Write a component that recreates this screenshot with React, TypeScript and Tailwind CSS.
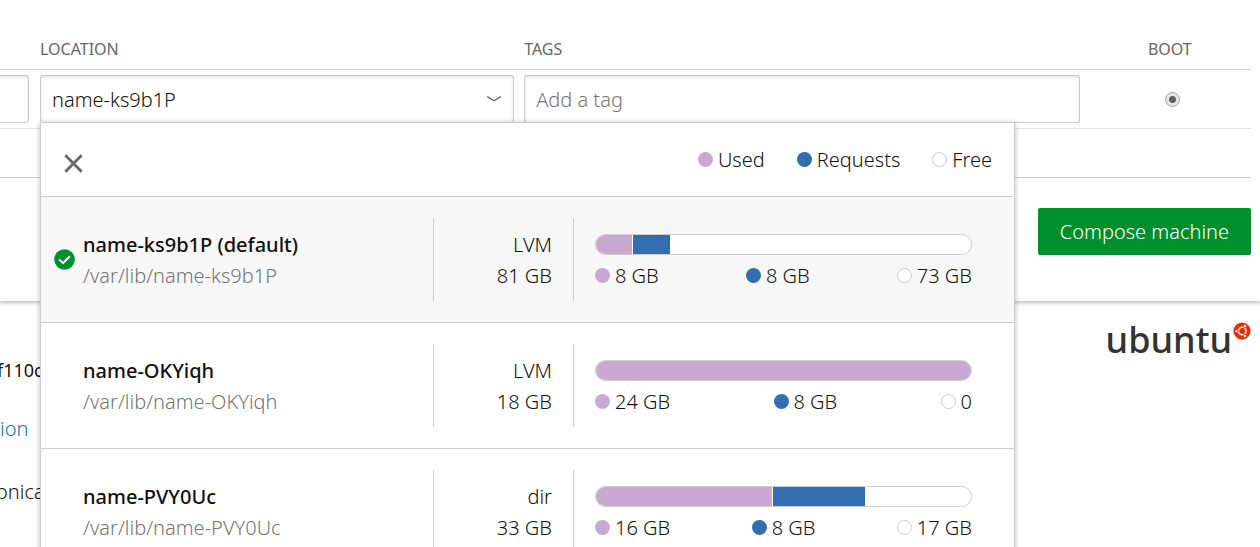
import { ReactNode } from "react";

type Pool = {
  name: string;
  path: string;
  type: string;
  total: string;
  used: string;
  requests: string;
  free: string;
  usedPct: number;
  requestPct: number;
  selected?: boolean;
};

const pools: Pool[] = [
  { name: "name-ks9b1P (default)", path: "/var/lib/name-ks9b1P", type: "LVM", total: "81 GB", used: "8 GB", requests: "8 GB", free: "73 GB", usedPct: 9.9, requestPct: 9.9, selected: true },
  { name: "name-OKYiqh", path: "/var/lib/name-OKYiqh", type: "LVM", total: "18 GB", used: "24 GB", requests: "8 GB", free: "0", usedPct: 100, requestPct: 0 },
  { name: "name-PVY0Uc", path: "/var/lib/name-PVY0Uc", type: "dir", total: "33 GB", used: "16 GB", requests: "8 GB", free: "17 GB", usedPct: 47.2, requestPct: 24.6 },
];

const dotColors = {
  used: "bg-[#c9a9d1]",
  requests: "bg-[#336fb0]",
  free: "border border-[#cdcdcd] bg-white",
};

function Key({ kind, children }: { kind: keyof typeof dotColors; children: ReactNode }) {
  return (
    <span className="flex items-center gap-[5px] whitespace-nowrap">
      <span className={`size-[15px] shrink-0 rounded-full ${dotColors[kind]}`} />
      {children}
    </span>
  );
}

function PoolRow({ pool }: { pool: Pool }) {
  return (
    <li className={`border-t border-[#cdcdcd] ${pool.selected ? "bg-[#f7f7f7]" : "bg-white"}`}>
      <button type="button" className="flex w-full py-[21px] text-left">
        <span className="flex w-[392px] items-center">
          <span className="flex w-[42px] pl-[13px]">
            {pool.selected && (
              <svg viewBox="0 0 21 21" className="size-[21px]" aria-hidden="true">
                <circle cx="10.5" cy="10.5" r="10.3" fill="#008f2d" />
                <path d="M5.2 10.4 9 14.2 15.8 7.2" fill="none" stroke="#fff" strokeWidth="2" />
              </svg>
            )}
          </span>
          <span className="flex flex-col leading-[31px]">
            <span className="font-medium text-[#111]">{pool.name}</span>
            <span className="text-[#757575]">{pool.path}</span>
          </span>
        </span>
        <span className="flex w-[141px] flex-col border-x border-[#cdcdcd] px-[21px] pt-[11px] pb-[10px] text-right leading-[31px]">
          <span>{pool.type}</span>
          <span>{pool.total}</span>
        </span>
        <span className="flex flex-1 flex-col gap-[5px] pt-[16px] pr-[42px] pl-[21px]">
          <span className="flex h-[21px] overflow-hidden rounded-full border border-[#cdcdcd] bg-white">
            <span className="border-r border-white bg-[#c9a9d1] last:border-r-0" style={{ width: `${pool.usedPct}%` }} />
            {pool.requestPct > 0 && <span className="bg-[#336fb0]" style={{ width: `${pool.requestPct}%` }} />}
          </span>
          <span className="flex justify-between leading-[31px]">
            <Key kind="used">{pool.used}</Key>
            <Key kind="requests">{pool.requests}</Key>
            <Key kind="free">{pool.free}</Key>
          </span>
        </span>
      </button>
    </li>
  );
}

function PoolMenu() {
  return (
    <div className="absolute top-[52px] left-[5px] z-10 w-[975px] rounded-[2px] border border-[#cdcdcd] bg-white shadow-[0_1px_5px_1px_rgba(0,0,0,0.2)]">
      <div className="flex h-[73px] items-center justify-between px-[22px]">
        <button type="button" aria-label="Close" className="mt-[8px] block">
          <svg viewBox="0 0 21 21" className="size-[21px]" aria-hidden="true">
            <path d="M2.3 2.3 18.7 18.7M18.7 2.3 2.3 18.7" fill="none" stroke="#666" strokeWidth="2.8" />
          </svg>
        </button>
        <div className="flex gap-[32px]">
          <Key kind="used">Used</Key>
          <Key kind="requests">Requests</Key>
          <Key kind="free">Free</Key>
        </div>
      </div>
      <ul>
        {pools.map((pool) => (
          <PoolRow key={pool.name} pool={pool} />
        ))}
      </ul>
    </div>
  );
}

const field =
  "block h-[48px] w-full appearance-none rounded-[2px] border border-[#cdcdcd] bg-white px-[11px] shadow-[inset_0_1px_3px_rgba(0,0,0,0.15)] outline-none";

export default function App() {
  return (
    <div className="h-screen overflow-hidden bg-white font-['Noto_Sans',sans-serif] text-[20px] leading-[31px] font-light text-[#111]">
      <section className="pr-[9px] pb-[46px] shadow-[0_1px_4px_1px_rgba(0,0,0,0.25)]">
        <table className="w-full table-fixed border-b border-[#cdcdcd]">
          <thead className="text-[16px] leading-[20px] text-[#666]">
            <tr className="border-b border-[#cdcdcd]">
              <th className="w-[35px]" aria-label="Size" />
              <th className="w-[38.7%] px-[5px] pt-[39px] pb-[10px] text-left font-normal">LOCATION</th>
              <th className="w-[45.2%] px-[5px] pt-[39px] pb-[10px] text-left font-normal">TAGS</th>
              <th className="pt-[39px] pb-[10px] pl-[4px] text-center font-normal">BOOT</th>
            </tr>
          </thead>
          <tbody>
            <tr className="border-b border-[#e5e5e5]">
              <td className="py-[5px] pr-[6px]">
                <div className="-ml-[8px]">
                  <input aria-label="Size" className={field} />
                </div>
              </td>
              <td className="relative px-[5px] py-[5px]">
                <div className="relative">
                  <select aria-label="Location" className={field}>
                    <option>name-ks9b1P</option>
                  </select>
                  <svg viewBox="0 0 16 16" className="pointer-events-none absolute top-[16px] right-[12px] size-[16px]" aria-hidden="true">
                    <path d="M1.2 5.6C5 7.6 6.2 9.6 8 9.6S11 7.6 14.8 5.6" fill="none" stroke="#666" strokeWidth="1.3" />
                  </svg>
                </div>
                <PoolMenu />
              </td>
              <td className="px-[5px] py-[5px]">
                <input aria-label="Tags" placeholder="Add a tag" className={`${field} placeholder:text-[#757575]`} />
              </td>
              <td className="pl-[10px]">
                <input
                  type="radio"
                  aria-label="Boot disk"
                  defaultChecked
                  className="mx-auto block size-[15px] appearance-none rounded-full border border-[#a6a6a6] bg-[radial-gradient(circle,#5f5f5f_0,#5f5f5f_3px,#e4e4e4_4px)]"
                />
              </td>
            </tr>
            <tr>
              <td colSpan={4} className="h-[49px]" />
            </tr>
          </tbody>
        </table>
        <div className="flex justify-end pt-[30px]">
          <button type="button" className="h-[47px] rounded-[2px] bg-[#008f2d] px-[22px] text-white">
            Compose machine
          </button>
        </div>
      </section>
      <footer className="flex items-start justify-between pt-[18px] pr-[9px]">
        <div className="flex flex-col pt-[36px]">
          <p className="-ml-[3px] text-[18px] leading-[31px] font-normal">f110c</p>
          <a href="#documentation" className="mt-[27px] text-[#007aa6]">ion</a>
          <p className="mt-[32px] -ml-[4px]">onica</p>
        </div>
        <div className="flex items-start gap-[1px] text-[#333]">
          <span className="text-[36px] leading-[42px] font-medium">ubuntu</span>
          <svg viewBox="0 0 18 18" className="mt-[3px] size-[18px]" aria-hidden="true">
            <circle cx="9" cy="9" r="8.6" fill="#ef2a00" />
            <circle cx="9.3" cy="9" r="3.7" fill="none" stroke="#fff" strokeWidth="1.6" />
            <path d="M9.3 9H2M9.3 9 13 2.6M9.3 9 13 15.4" stroke="#ef2a00" strokeWidth="0.9" />
            <g fill="#fff" stroke="#ef2a00" strokeWidth="0.6">
              <circle cx="3.5" cy="9" r="1.6" />
              <circle cx="11.9" cy="4" r="1.6" />
              <circle cx="11.9" cy="14" r="1.6" />
            </g>
          </svg>
        </div>
      </footer>
    </div>
  );
}
